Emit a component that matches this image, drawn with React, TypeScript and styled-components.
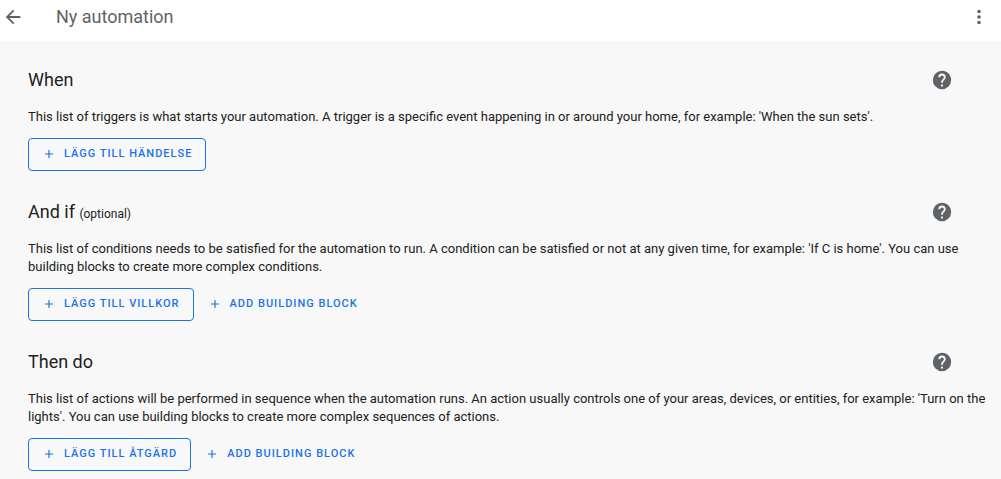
import React from "react";
import styled, { createGlobalStyle } from "styled-components";

const GlobalStyle = createGlobalStyle`
  * { box-sizing: border-box; }
  body {
    margin: 0;
    background: #f8f8f8;
    color: #212121;
    font-family: Roboto, "Liberation Sans", sans-serif;
  }
`;

const Header = styled.header`
  display: flex;
  align-items: center;
  height: 41px;
  padding: 0 4px 8px 0;
  background: #ffffff;
  color: #5f6368;
`;

const Title = styled.h1`
  flex: 1;
  margin: 0 0 0 30px;
  font-size: 18px;
  line-height: 24px;
  font-weight: 400;
`;

const IconButton = styled.button<{ $size: number }>`
  display: flex;
  align-items: center;
  justify-content: center;
  width: ${(p) => p.$size}px;
  height: ${(p) => p.$size}px;
  padding: 0;
  border: 0;
  background: transparent;
  color: #5f6368;
  cursor: pointer;
`;

const Content = styled.main`
  display: flex;
  flex-direction: column;
  gap: 23px;
  padding: 21px 12px 8px 28px;
`;

const Section = styled.section`
  display: flex;
  flex-direction: column;
`;

const SectionHeader = styled.div`
  display: flex;
  align-items: center;
  justify-content: space-between;
  padding-right: 29px;
`;

const Heading = styled.h2`
  margin: 0;
  font-size: 18px;
  line-height: 24px;
  font-weight: 400;
`;

const Optional = styled.small`
  font-size: 12px;
  line-height: 16px;
`;

const Description = styled.p`
  margin: 10px 0 12px;
  font-size: 13px;
  line-height: 18px;
`;

const Actions = styled.div`
  display: flex;
`;

const ActionButton = styled.button<{ $outlined?: boolean }>`
  display: flex;
  align-items: center;
  gap: 8px;
  height: 33px;
  padding: 0 ${(p) => (p.$outlined ? 13 : 8)}px 2px ${(p) => (p.$outlined ? 13 : 14)}px;
  border: ${(p) => (p.$outlined ? "1px solid #1a73e8" : "0")};
  border-radius: 4px;
  background: transparent;
  color: #1a73e8;
  font-family: inherit;
  font-size: 11px;
  line-height: 16px;
  font-weight: 500;
  letter-spacing: 1px;
  text-transform: uppercase;
  white-space: nowrap;
  cursor: pointer;
`;

const icons = {
  back: "M20,11V13H8L13.5,18.5L12.08,19.92L4.16,12L12.08,4.08L13.5,5.5L8,11H20Z",
  more: "M12,16A2,2 0 0,1 14,18A2,2 0 0,1 12,20A2,2 0 0,1 10,18A2,2 0 0,1 12,16M12,10A2,2 0 0,1 14,12A2,2 0 0,1 12,14A2,2 0 0,1 10,12A2,2 0 0,1 12,10M12,4A2,2 0 0,1 14,6A2,2 0 0,1 12,8A2,2 0 0,1 10,6A2,2 0 0,1 12,4Z",
  help: "M15.07,11.25L14.17,12.17C13.45,12.89 13,13.5 13,15H11V14.5C11,13.39 11.45,12.39 12.17,11.67L13.41,10.41C13.78,10.05 14,9.55 14,9C14,7.89 13.1,7 12,7A2,2 0 0,0 10,9H8A4,4 0 0,1 12,5A4,4 0 0,1 16,9C16,9.88 15.64,10.67 15.07,11.25M13,19H11V17H13M12,2A10,10 0 0,0 2,12A10,10 0 0,0 12,22A10,10 0 0,0 22,12C22,6.47 17.5,2 12,2Z",
  plus: "M19,13H13V19H11V13H5V11H11V5H13V11H19V13Z",
};

function Icon({ name, size }: { name: keyof typeof icons; size: number }) {
  return (
    <svg width={size} height={size} viewBox="0 0 24 24" fill="currentColor" aria-hidden="true">
      <path d={icons[name]} />
    </svg>
  );
}

interface SectionData {
  title: string;
  optional?: boolean;
  description: string;
  add: string;
  block?: boolean;
}

const sections: SectionData[] = [
  {
    title: "When",
    description:
      "This list of triggers is what starts your automation. A trigger is a specific event happening in or around your home, for example: 'When the sun sets'.",
    add: "Lägg till händelse",
  },
  {
    title: "And if",
    optional: true,
    description:
      "This list of conditions needs to be satisfied for the automation to run. A condition can be satisfied or not at any given time, for example: 'If C is home'. You can use building blocks to create more complex conditions.",
    add: "Lägg till villkor",
    block: true,
  },
  {
    title: "Then do",
    description:
      "This list of actions will be performed in sequence when the automation runs. An action usually controls one of your areas, devices, or entities, for example: 'Turn on the lights'. You can use building blocks to create more complex sequences of actions.",
    add: "Lägg till åtgärd",
    block: true,
  },
];

export default function App() {
  return (
    <>
      <GlobalStyle />
      <Header>
        <IconButton $size={26} aria-label="Back">
          <Icon name="back" size={22} />
        </IconButton>
        <Title>Ny automation</Title>
        <IconButton $size={36} aria-label="Menu">
          <Icon name="more" size={22} />
        </IconButton>
      </Header>
      <Content>
        {sections.map((s) => (
          <Section key={s.title}>
            <SectionHeader>
              <Heading>
                {s.title}
                {s.optional && (
                  <>
                    {" "}
                    <Optional>(optional)</Optional>
                  </>
                )}
              </Heading>
              <IconButton $size={36} aria-label={`Help: ${s.title}`}>
                <Icon name="help" size={22} />
              </IconButton>
            </SectionHeader>
            <Description>{s.description}</Description>
            <Actions>
              <ActionButton $outlined>
                <Icon name="plus" size={14} />
                {s.add}
              </ActionButton>
              {s.block && (
                <ActionButton>
                  <Icon name="plus" size={14} />
                  Add building block
                </ActionButton>
              )}
            </Actions>
          </Section>
        ))}
      </Content>
    </>
  );
}
